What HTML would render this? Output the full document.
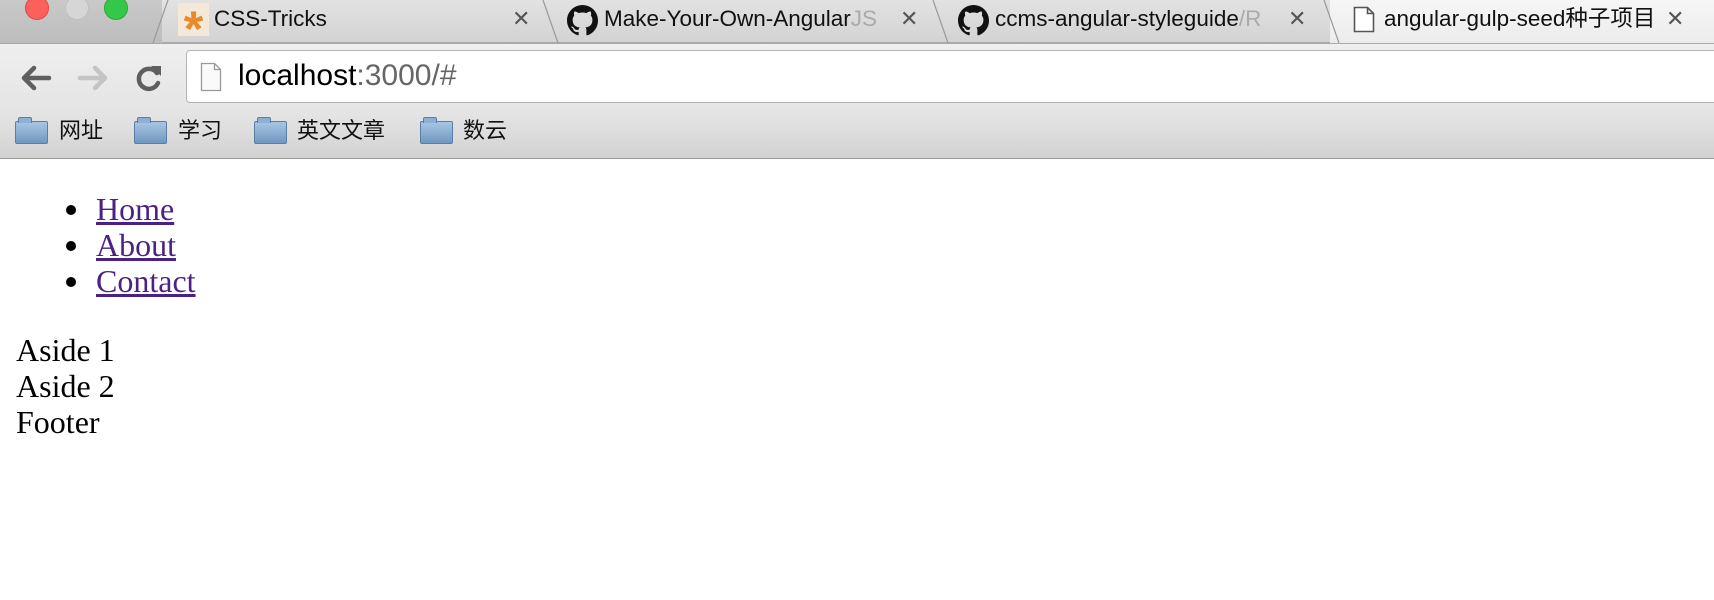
<!DOCTYPE html>
<html><head><meta charset="utf-8"><style>
*{margin:0;padding:0;box-sizing:border-box}
body{width:1714px;height:600px;overflow:hidden;background:#fff;position:relative;font-family:"Liberation Sans","Noto Sans CJK SC",sans-serif}
.abs{position:absolute}
#tabs{left:0;top:0;width:1714px;height:43px;background:linear-gradient(#c9c9c9,#bdbdbd)}
.tab{position:absolute;top:0;height:43px;background:linear-gradient(#e2e2e2,#d3d3d3);border-bottom:1px solid #a9a9a9}
.tab.act{background:linear-gradient(#f6f6f6,#ececec);border-bottom:none}
.tt{position:absolute;top:6px;font-size:22.5px;line-height:26px;height:26px;color:#111;white-space:nowrap}
.x{position:absolute;top:6px;font-size:22px;color:#555}
.light{position:absolute;top:-4px;width:24px;height:24px;border-radius:50%}
#toolbar{left:0;top:43px;width:1714px;height:71px;background:linear-gradient(#efefef,#e4e4e4);border-top:1px solid #a9a9a9}
#url{left:186px;top:50px;width:1540px;height:53px;background:#fff;border:1px solid #b4b4b4;border-radius:4px}
#bm{left:0;top:114px;width:1714px;height:45px;background:linear-gradient(#e4e4e4,#d2d2d2);border-bottom:1px solid #9a9a9a}
.bmt{position:absolute;top:117px;font-size:22px;line-height:28px;color:#111}
.folder{position:absolute;top:121px;width:33px;height:23px;background:linear-gradient(#a9c6e3,#6f97c2);border:1px solid #5a7ea6;border-radius:2px}
.folder:before{content:"";position:absolute;left:2px;top:-5px;width:12px;height:5px;background:#8fb0d4;border:1px solid #5a7ea6;border-bottom:none;border-radius:2px 2px 0 0}
.c{position:absolute;font-family:"Liberation Serif",serif;font-size:32px;line-height:36px;color:#000;white-space:nowrap}
.c a{color:#4a2186;text-decoration:underline}
.dot{position:absolute;width:10px;height:10px;border-radius:50%;background:#000}
</style></head><body>
<div id="tabs" class="abs"></div>
<div class="light" style="left:25px;background:#fc605c;border:1px solid #de4a45"></div>
<div class="light" style="left:65px;background:#d6d6d6;border:1px solid #c0c0c0"></div>
<div class="light" style="left:104px;background:#34c84a;border:1px solid #2aa63b"></div>

<div class="tab" style="left:162px;width:390px"></div>
<div class="tab" style="left:552px;width:392px"></div>
<div class="tab" style="left:944px;width:386px"></div>
<div class="tab act" style="left:1330px;width:384px"></div>
<svg class="abs" style="left:140px;top:0" width="1574" height="43">
<g stroke="#999" fill="none" stroke-width="1.2">
<path d="M13 43 L28 0"/><path d="M403 0 L418 43"/><path d="M793 0 L808 43"/><path d="M1184 0 L1199 43"/>
</g></svg>
<div class="abs" style="left:178px;top:3px;width:31px;height:33px;background:#f4e8d8;color:#e8892b;font-size:50px;line-height:52px;text-align:center;font-weight:bold;overflow:hidden">*</div>
<div class="tt" style="left:214px">CSS-Tricks</div><div class="x" style="left:512px">✕</div>
<svg class="abs" style="left:567px;top:5px" width="31" height="31" viewBox="0 0 16 16"><path fill="#111" d="M8 0C3.58 0 0 3.58 0 8c0 3.54 2.29 6.53 5.47 7.59.4.07.55-.17.55-.38v-1.33c-2.23.48-2.7-1.07-2.7-1.07-.36-.92-.89-1.17-.89-1.17-.73-.5.06-.49.06-.49.8.06 1.23.83 1.23.83.71 1.22 1.87.87 2.33.66.07-.52.28-.87.51-1.07-1.78-.2-3.64-.89-3.64-3.95 0-.87.31-1.59.82-2.15-.08-.2-.36-1.02.08-2.12 0 0 .67-.21 2.2.82a7.6 7.6 0 014 0c1.53-1.04 2.2-.82 2.2-.82.44 1.1.16 1.92.08 2.12.51.56.82 1.27.82 2.15 0 3.07-1.87 3.75-3.65 3.95.29.25.54.73.54 1.48v2.2c0 .21.15.46.55.38A8 8 0 0016 8c0-4.42-3.58-8-8-8z"/></svg>
<div class="tt" style="left:604px">Make-Your-Own-Angular<span style="color:#aaa">JS</span></div><div class="x" style="left:900px">✕</div>
<svg class="abs" style="left:958px;top:5px" width="31" height="31" viewBox="0 0 16 16"><path fill="#111" d="M8 0C3.58 0 0 3.58 0 8c0 3.54 2.29 6.53 5.47 7.59.4.07.55-.17.55-.38v-1.33c-2.23.48-2.7-1.07-2.7-1.07-.36-.92-.89-1.17-.89-1.17-.73-.5.06-.49.06-.49.8.06 1.23.83 1.23.83.71 1.22 1.87.87 2.33.66.07-.52.28-.87.51-1.07-1.78-.2-3.64-.89-3.64-3.95 0-.87.31-1.59.82-2.15-.08-.2-.36-1.02.08-2.12 0 0 .67-.21 2.2.82a7.6 7.6 0 014 0c1.53-1.04 2.2-.82 2.2-.82.44 1.1.16 1.92.08 2.12.51.56.82 1.27.82 2.15 0 3.07-1.87 3.75-3.65 3.95.29.25.54.73.54 1.48v2.2c0 .21.15.46.55.38A8 8 0 0016 8c0-4.42-3.58-8-8-8z"/></svg>
<div class="tt" style="left:995px">ccms-angular-styleguide<span style="color:#aaa">/R</span></div><div class="x" style="left:1288px">✕</div>
<svg class="abs" style="left:1353px;top:6px" width="22" height="27" viewBox="0 0 22 27"><path d="M1.5 1.5h13l6 6v18h-19z M14.5 1.5v6h6" fill="#fff" stroke="#555" stroke-width="1.6"/></svg>
<div class="tt" style="left:1384px">angular-gulp-seed种子项目</div><div class="x" style="left:1666px">✕</div>

<div id="toolbar" class="abs"></div>
<svg class="abs" style="left:18px;top:63px" width="150" height="32" viewBox="0 0 150 32">
<g fill="none" stroke-linecap="round" stroke-linejoin="round" stroke-width="4.5">
<path d="M31 15H6M16 5L6 15l10 10" stroke="#5f5f5f"/>
<path d="M62 15h25M77 5l10 10-10 10" stroke="#c4c4c4"/>
<path d="M139 10a10 10 0 1 0 1 10" stroke="#5f5f5f"/>
</g><path d="M133 3l10 0 0 10z" fill="#5f5f5f"/></svg>
<div id="url" class="abs"></div>
<svg class="abs" style="left:200px;top:62px" width="22" height="30" viewBox="0 0 22 30"><path d="M1.5 1.5h13l6 6v21h-19z M14.5 1.5v6h6" fill="#fafafa" stroke="#999" stroke-width="1.3"/></svg>
<div class="abs" style="left:238px;top:59px;font-size:30px;color:#000">localhost<span style="color:#666">:3000/#</span></div>

<div id="bm" class="abs"></div>
<div class="folder" style="left:15px"></div><div class="bmt" style="left:59px">网址</div>
<div class="folder" style="left:134px"></div><div class="bmt" style="left:178px">学习</div>
<div class="folder" style="left:254px"></div><div class="bmt" style="left:297px">英文文章</div>
<div class="folder" style="left:420px"></div><div class="bmt" style="left:463px">数云</div>

<div class="dot" style="left:66px;top:205px"></div>
<div class="dot" style="left:66px;top:241px"></div>
<div class="dot" style="left:66px;top:277px"></div>
<div class="c" style="left:96px;top:191px"><a>Home</a></div>
<div class="c" style="left:96px;top:227px"><a>About</a></div>
<div class="c" style="left:96px;top:263px"><a>Contact</a></div>
<div class="c" style="left:16px;top:332px">Aside 1</div>
<div class="c" style="left:16px;top:368px">Aside 2</div>
<div class="c" style="left:16px;top:404px">Footer</div>
</body></html>
